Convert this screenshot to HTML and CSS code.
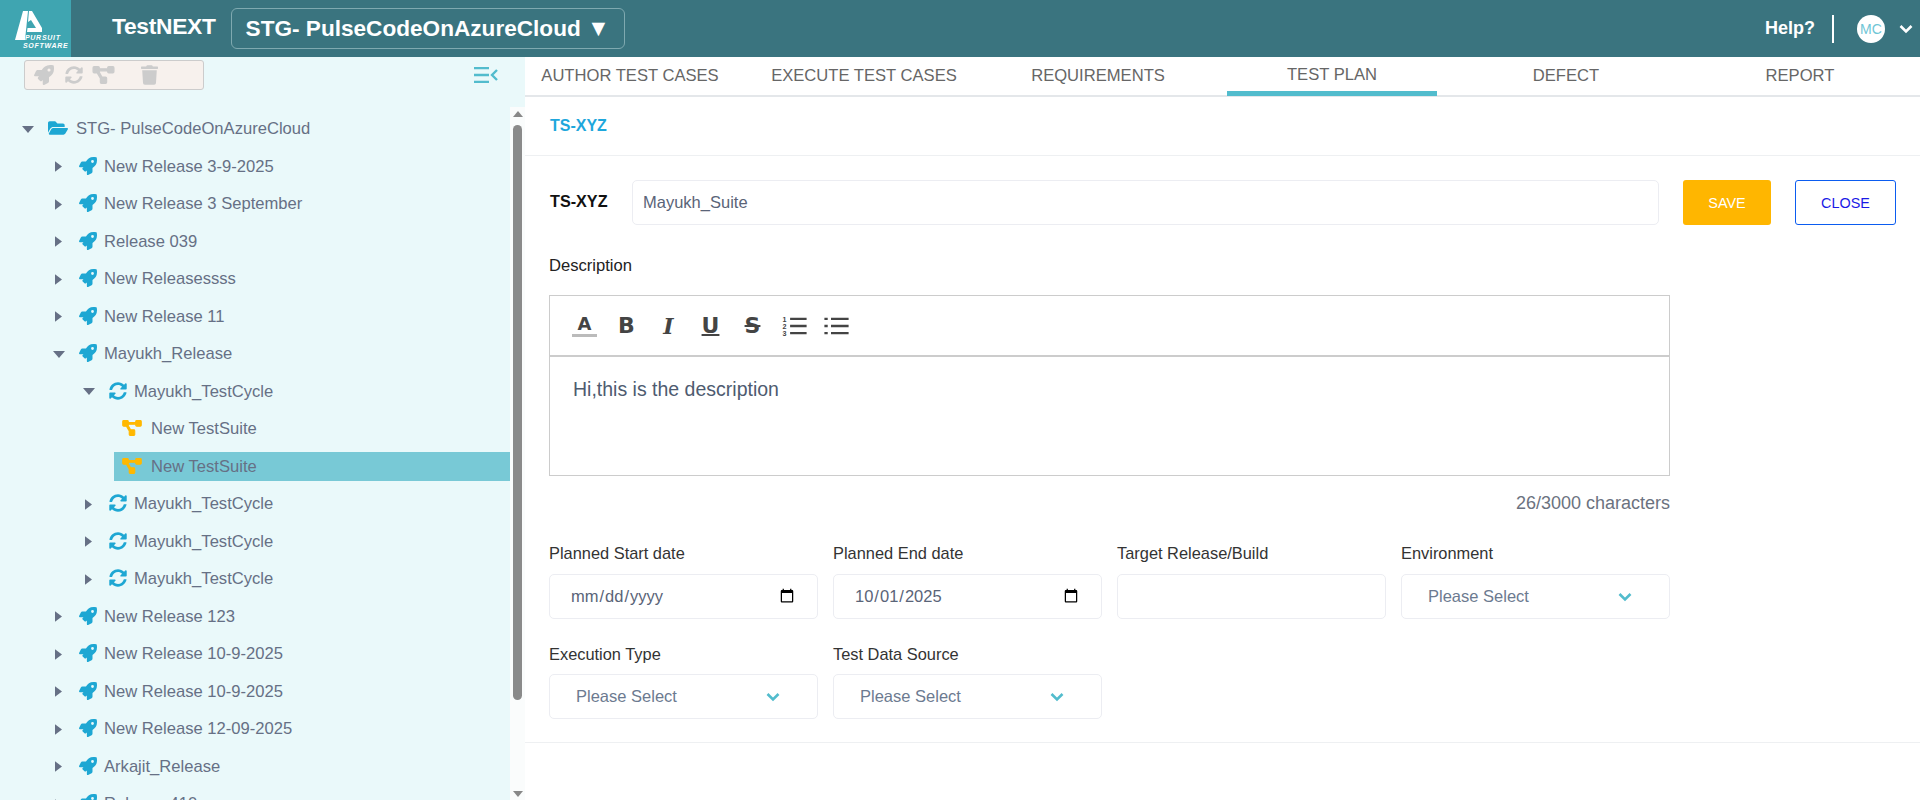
FILE: index.html
```html
<!DOCTYPE html>
<html lang="en">
<head>
<meta charset="utf-8">
<title>TestNEXT</title>
<link rel="stylesheet" href="styles.css">
</head>
<body>
<svg class="defs" aria-hidden="true">
  <symbol id="rocket" viewBox="0 0 512 512"><path d="M505.12 19.09c-1.19-5.53-6.66-11-12.21-12.19C460.72 0 435.51 0 410.41 0 307.18 0 245.27 55.2 199.05 128H94.84c-16.35.02-35.56 11.88-42.89 26.48L2.52 253.3A28.4 28.4 0 0 0 0 264a24 24 0 0 0 24 24h103.81l-22.47 22.47c-11.37 11.36-13 32.26 0 45.25l50.9 50.9c11.16 11.19 32.16 13.16 45.28 0L224 384.16V488a24 24 0 0 0 24 24 28.56 28.56 0 0 0 10.71-2.52l98.73-49.39c14.63-7.3 26.51-26.5 26.51-42.86V312.8c72.6-46.31 128.03-108.41 128.03-211.1C512.08 76.5 512.08 51.3 505.12 19.09zM384.04 168a40 40 0 1 1 40.01-40 40.02 40.02 0 0 1-40.01 40z"/></symbol>
  <symbol id="sync" viewBox="0 0 512 512"><path d="M370.72 133.28C339.458 104.008 298.888 87.962 255.848 88c-77.458.068-144.328 53.178-162.791 126.85-1.344 5.363-6.122 9.15-11.651 9.15H24.103c-7.498 0-13.194-6.807-11.807-14.176C33.933 94.924 134.813 8 256 8c66.448 0 126.791 26.136 171.315 68.685L463.03 40.97C478.149 25.851 504 36.559 504 57.941V192c0 13.255-10.745 24-24 24H345.941c-21.382 0-32.09-25.851-16.971-40.971l41.75-41.749zM32 296h134.059c21.382 0 32.09 25.851 16.971 40.971l-41.75 41.75c31.262 29.273 71.835 45.319 114.876 45.28 77.418-.07 144.315-53.144 162.787-126.849 1.344-5.363 6.122-9.15 11.651-9.15h57.304c7.498 0 13.194 6.807 11.807 14.176C478.067 417.076 377.187 504 256 504c-66.448 0-126.791-26.136-171.315-68.685L48.97 471.03C33.851 486.149 8 475.441 8 454.059V320c0-13.255 10.745-24 24-24z"/></symbol>
  <symbol id="diagram" viewBox="-20 -20 680 552"><path stroke-width="36" d="M384 320H256c-17.67 0-32 14.33-32 32v128c0 17.67 14.33 32 32 32h128c17.67 0 32-14.33 32-32V352c0-17.67-14.33-32-32-32zM192 32c0-17.67-14.33-32-32-32H32C14.33 0 0 14.33 0 32v128c0 17.67 14.33 32 32 32h95.72l73.16 128.04C211.98 300.98 232.4 288 256 288h.28L192 175.51V128h224V64H192V32zM608 0H480c-17.67 0-32 14.33-32 32v128c0 17.67 14.33 32 32 32h128c17.67 0 32-14.33 32-32V32c0-17.67-14.33-32-32-32z"/></symbol>
  <symbol id="trash" viewBox="0 0 448 512"><path d="M432 32H312l-9.4-18.7A24 24 0 0 0 281.1 0H166.8a23.72 23.72 0 0 0-21.4 13.3L136 32H16A16 16 0 0 0 0 48v32a16 16 0 0 0 16 16h416a16 16 0 0 0 16-16V48a16 16 0 0 0-16-16zM53.2 467a48 48 0 0 0 47.9 45h245.8a48 48 0 0 0 47.9-45L416 128H32z"/></symbol>
  <symbol id="folder" viewBox="0 0 576 512"><path d="M572.694 292.093L500.27 416.248A63.997 63.997 0 0 1 444.989 448H45.025c-18.523 0-30.064-20.093-20.731-36.093l72.424-124.155A64 64 0 0 1 152 256h399.964c18.523 0 30.064 20.093 20.73 36.093zM152 224h328v-48c0-26.51-21.49-48-48-48H272l-64-64H48C21.49 64 0 85.49 0 112v278.046l69.077-118.418C86.214 242.25 117.989 224 152 224z"/></symbol>
  <symbol id="right" viewBox="0 0 8 12"><path d="M0 0l8 6-8 6z"/></symbol>
  <symbol id="down" viewBox="0 1 12 7"><path d="M0 1h12L6 8z"/></symbol>
  <symbol id="chev" viewBox="0 0 14 10"><path d="M1.5 2 7 7.5 12.5 2" fill="none" stroke="currentColor" stroke-width="2.6"/></symbol>
</svg>

<header class="topbar">
  <div class="logo">
    <svg class="logo-mark" viewBox="0 0 71 57">
      <path fill="#fff" d="M23 11 28 11 25 40 15 40Z"/>
      <path fill="#fff" d="M29 11 32 11 42 28 42 32 27 32 27.5 28 36 28 31 20 28 22Z"/>
    </svg>
    <div class="logo-text">PURSUIT<br>SOFTWARE</div>
  </div>
  <div class="brand">TestNEXT</div>
  <div class="project">STG- PulseCodeOnAzureCloud <span class="project-caret">▼</span></div>
  <div class="top-right">
    <span class="help">Help?</span>
    <span class="sep"></span>
    <span class="avatar">MC</span>
    <svg class="top-chev"><use href="#chev"/></svg>
  </div>
</header>

<div class="layout">
  <aside class="sidebar">
    <div class="side-tools">
      <div class="toolbox">
        <svg class="ti ti-rocket"><use href="#rocket"/></svg>
        <svg class="ti ti-sync"><use href="#sync"/></svg>
        <svg class="ti ti-diagram"><use href="#diagram"/></svg>
        <svg class="ti ti-trash"><use href="#trash"/></svg>
      </div>
      <svg class="collapse" viewBox="0 0 24 16"><path d="M0 1h15M0 8h15M0 15h15" stroke="#52bccd" stroke-width="2.4" fill="none"/><path d="M23 3 18 8l5 5" stroke="#52bccd" stroke-width="2.4" fill="none"/></svg>
    </div>
    <ul class="tree">
      <li class="node l0"><svg class="caret cd"><use href="#down"/></svg><svg class="ic ic-folder"><use href="#folder"/></svg><span>STG- PulseCodeOnAzureCloud</span></li>
      <li class="node l1"><svg class="caret cr"><use href="#right"/></svg><svg class="ic"><use href="#rocket"/></svg><span>New Release 3-9-2025</span></li>
      <li class="node l1"><svg class="caret cr"><use href="#right"/></svg><svg class="ic"><use href="#rocket"/></svg><span>New Release 3 September</span></li>
      <li class="node l1"><svg class="caret cr"><use href="#right"/></svg><svg class="ic"><use href="#rocket"/></svg><span>Release 039</span></li>
      <li class="node l1"><svg class="caret cr"><use href="#right"/></svg><svg class="ic"><use href="#rocket"/></svg><span>New Releasessss</span></li>
      <li class="node l1"><svg class="caret cr"><use href="#right"/></svg><svg class="ic"><use href="#rocket"/></svg><span>New Release 11</span></li>
      <li class="node l1"><svg class="caret cd"><use href="#down"/></svg><svg class="ic"><use href="#rocket"/></svg><span>Mayukh_Release</span></li>
      <li class="node l2"><svg class="caret cd"><use href="#down"/></svg><svg class="ic"><use href="#sync"/></svg><span>Mayukh_TestCycle</span></li>
      <li class="node l3"><svg class="ic ic-suite"><use href="#diagram"/></svg><span>New TestSuite</span></li>
      <li class="node l3 selected"><svg class="ic ic-suite"><use href="#diagram"/></svg><span>New TestSuite</span></li>
      <li class="node l2"><svg class="caret cr"><use href="#right"/></svg><svg class="ic"><use href="#sync"/></svg><span>Mayukh_TestCycle</span></li>
      <li class="node l2"><svg class="caret cr"><use href="#right"/></svg><svg class="ic"><use href="#sync"/></svg><span>Mayukh_TestCycle</span></li>
      <li class="node l2"><svg class="caret cr"><use href="#right"/></svg><svg class="ic"><use href="#sync"/></svg><span>Mayukh_TestCycle</span></li>
      <li class="node l1"><svg class="caret cr"><use href="#right"/></svg><svg class="ic"><use href="#rocket"/></svg><span>New Release 123</span></li>
      <li class="node l1"><svg class="caret cr"><use href="#right"/></svg><svg class="ic"><use href="#rocket"/></svg><span>New Release 10-9-2025</span></li>
      <li class="node l1"><svg class="caret cr"><use href="#right"/></svg><svg class="ic"><use href="#rocket"/></svg><span>New Release 10-9-2025</span></li>
      <li class="node l1"><svg class="caret cr"><use href="#right"/></svg><svg class="ic"><use href="#rocket"/></svg><span>New Release 12-09-2025</span></li>
      <li class="node l1"><svg class="caret cr"><use href="#right"/></svg><svg class="ic"><use href="#rocket"/></svg><span>Arkajit_Release</span></li>
      <li class="node l1"><svg class="caret cr"><use href="#right"/></svg><svg class="ic"><use href="#rocket"/></svg><span>Release 410</span></li>
    </ul>
    <div class="scrollbar">
      <svg class="sb-arrow"><use href="#down"/></svg>
      <div class="sb-thumb"></div>
      <svg class="sb-arrow sb-end"><use href="#down"/></svg>
    </div>
  </aside>

  <main class="main">
    <nav class="tabs">
      <div class="tab">AUTHOR TEST CASES</div>
      <div class="tab">EXECUTE TEST CASES</div>
      <div class="tab">REQUIREMENTS</div>
      <div class="tab active">TEST PLAN</div>
      <div class="tab">DEFECT</div>
      <div class="tab">REPORT</div>
    </nav>
    <div class="crumb"><a class="crumb-link">TS-XYZ</a></div>
    <section class="form">
      <div class="title-row">
        <label class="id-label">TS-XYZ</label>
        <input class="box name-input" type="text" value="Mayukh_Suite">
        <button class="btn save">SAVE</button>
        <button class="btn close">CLOSE</button>
      </div>
      <div class="desc-label">Description</div>
      <div class="editor">
        <div class="ed-tools">
          <span class="et et-a">A</span>
          <span class="et et-b">B</span>
          <span class="et et-i">I</span>
          <span class="et et-u">U</span>
          <span class="et et-s">S</span>
          <svg class="et-list" viewBox="0 0 22 20">
            <text x="0" y="6" class="num">1</text><text x="0" y="12.5" class="num">2</text><text x="0" y="19" class="num">3</text>
            <path d="M7 3.5h15M7 10h15M7 16.5h15" stroke="#444" stroke-width="2.2"/>
          </svg>
          <svg class="et-list" viewBox="0 0 22 20">
            <path d="M0 3.5h3M0 10h3M0 16.5h3M6 3.5h16M6 10h16M6 16.5h16" stroke="#444" stroke-width="2.2"/>
          </svg>
        </div>
        <div class="ed-body">Hi,this is the description</div>
      </div>
      <div class="counter">26/3000 characters</div>
      <div class="fields">
        <div class="field"><label>Planned Start date</label><input class="box date" type="date"></div>
        <div class="field"><label>Planned End date</label><input class="box date" type="date" value="2025-10-01"></div>
        <div class="field"><label>Target Release/Build</label><input class="box" type="text"></div>
        <div class="field"><label>Environment</label><div class="box select"><span>Please Select</span><svg class="sel-chev"><use href="#chev"/></svg></div></div>
        <div class="field tight"><label>Execution Type</label><div class="box select"><span>Please Select</span><svg class="sel-chev"><use href="#chev"/></svg></div></div>
        <div class="field tight"><label>Test Data Source</label><div class="box select"><span>Please Select</span><svg class="sel-chev"><use href="#chev"/></svg></div></div>
      </div>
    </section>
  </main>
</div>
</body>
</html>
```
FILE: styles.css
```css
* { box-sizing: border-box; }
html, body { margin: 0; height: 100%; overflow: hidden; }
body { font-family: "Liberation Sans", Arial, sans-serif; color: #212529; background: #fff; display: flex; flex-direction: column; }
.defs { display: none; }

.topbar { height: 57px; flex: none; background: #3a747f; display: flex; align-items: center; color: #fff; }
.logo { width: 71px; height: 57px; background: #3fa5b1; position: relative; flex: none; }
.logo-mark { position: absolute; left: 0; top: 0; width: 71px; height: 57px; }
.logo-text { position: absolute; left: 23px; top: 34px; font: italic bold 7px/8px "Liberation Sans", sans-serif; letter-spacing: .7px; white-space: nowrap; text-indent: 2px; }
.brand { margin-left: 41px; font-size: 22.8px; font-weight: 700; letter-spacing: -.3px; transform: translateY(-2px); }
.project { margin-left: 15px; height: 41px; padding: 0 14px; border: 1px solid #7fa9b0; border-radius: 6px; font-size: 22.6px; font-weight: 700; line-height: 39px; white-space: nowrap; }
.project-caret { font-size: 23px; line-height: 20px; }
.top-right { margin-left: auto; display: flex; align-items: center; }
.help { font-size: 18px; font-weight: 700; }
.sep { width: 2px; height: 28px; background: #fff; margin: 0 23px 0 17px; }
.avatar { width: 28px; height: 28px; border-radius: 50%; background: #fff; color: #6fc6d6; font-size: 14px; text-align: center; line-height: 28px; }
.top-chev { width: 14px; height: 10px; margin: 0 7px 0 14px; color: #fff; }

.layout { flex: 1; display: flex; min-height: 0; }
.sidebar { width: 525px; flex: none; background: #eaf9fa; position: relative; overflow: hidden; z-index: 1; }
.side-tools { display: flex; align-items: center; justify-content: space-between; padding: 3px 27px 0 24px; height: 33px; }
.toolbox { width: 180px; height: 30px; background: #f7f1ed; border: 1px solid #ccc; border-radius: 3px; display: flex; align-items: center; }
.toolbox svg { fill: #ccc; stroke: #ccc; }
.ti-rocket { width: 20px; height: 20px; margin-left: 9px; stroke: none !important; }
.ti-sync { width: 18px; height: 18px; margin-left: 11px; stroke: none !important; }
.ti-diagram { width: 23px; height: 18px; margin-left: 9px; }
.ti-trash { width: 17px; height: 20px; margin-left: 26px; stroke: none !important; }
.collapse { width: 24px; height: 16px; }

.tree { list-style: none; margin: 20.5px 0 0; padding: 0; width: 510px; }
.node { height: 37.5px; display: flex; align-items: center; font-size: 16.6px; color: #667085; white-space: nowrap; }
.caret { fill: #667085; flex: none; }
.cd { width: 12px; height: 7px; }
.cr { width: 7px; height: 11px; margin: 0 3px 0 2px; }
.ic { width: 18px; height: 18px; fill: #1ea7d3; margin: 0 7px 0 8px; flex: none; transform: translateY(-1px); }
.l0 { padding-left: 22px; }
.l0 .ic-folder { width: 20px; height: 18px; margin: 0 8px 0 14px; }
.l1 { padding-left: 53px; }
.l1 .ic { margin-left: 14px; }
.l2 { padding-left: 83px; }
.l2 .ic { margin-left: 14px; }
.l3 { padding-left: 122px; }
.l3 .ic { margin-left: 0; }
.ic-suite { width: 20px; height: 16px; fill: #ffb800; stroke: #ffb800; margin-right: 9px; }
.selected { background: #78c9d6; height: 29px; margin: 4.25px 0; margin-left: 114px; padding-left: 8px; }

.scrollbar { position: absolute; top: 50px; right: 0; bottom: 0; width: 15px; background: #fafcfc; display: flex; flex-direction: column; align-items: center; }
.sb-arrow { width: 10px; height: 6px; fill: #888; margin-top: 4px; transform: scaleY(-1); }
.sb-thumb { width: 9px; height: 575px; background: #8a8a8a; border-radius: 5px; margin-top: 8px; }
.sb-end { margin-top: auto; margin-bottom: 3px; transform: none; }

.main { flex: 1; min-width: 0; position: relative; }
.tabs { display: flex; height: 40px; margin-left: -12px; border-bottom: 2px solid #e4e7ea; }
.tab { width: 234px; position: relative; text-align: center; font-size: 16.6px; line-height: 38px; color: #666; }
.tab.active { line-height: 35px; }
.tab.active::after { content: ""; position: absolute; left: 12px; right: 12px; bottom: -1px; height: 5px; background: #52bccd; }
.crumb { height: 59px; padding: 0 25px; border-bottom: 1px solid #eef0f2; display: flex; align-items: center; }
.crumb-link { color: #1ea7dc; font-size: 16px; font-weight: 700; }
.form { width: 1395px; padding: 24px 24px 0 24px; height: 587px; border-bottom: 1px solid #eef0f2; }
.title-row { display: flex; align-items: center; height: 45px; }
.id-label { font-size: 16.2px; font-weight: 700; color: #111; width: 83px; flex: none; padding-left: 1px; transform: translateY(-1px); }
.box { border: 1px solid #ecedf2; border-radius: 5px; background: #fff; height: 45px; font: 16.5px "Liberation Sans", sans-serif; color: #5a6478; outline: none; }
.name-input { width: 1027px; padding: 0 10px; flex: none; }
.btn { height: 45px; border-radius: 3px; font: 14.4px "Liberation Sans", sans-serif; flex: none; }
.save { width: 88px; background: #ffb600; color: #fff; border: 0; margin-left: 24px; }
.close { width: 101px; background: #fff; color: #1a1ae6; border: 1px solid #0b5cf0; margin-left: 24px; }
.desc-label { font-size: 16.6px; margin-top: 31px; line-height: 20px; color: #222; }
.editor { width: 1121px; height: 181px; margin-top: 19px; border: 1px solid #ccc; display: flex; flex-direction: column; }
.ed-tools { height: 61px; border-bottom: 2px solid #ccc; display: flex; align-items: center; padding-left: 22px; gap: 17px; flex: none; }
.et { width: 25px; text-align: center; font: 700 22px "DejaVu Sans", sans-serif; color: #444; line-height: 24px; }
.et-a { border-bottom: 3px solid #bbb; line-height: 20px; font-size: 18px; }
.et-i { font-family: "DejaVu Serif", serif; font-style: italic; }
.et-u { text-decoration: underline; text-decoration-thickness: 2px; }
.et-s { text-decoration: line-through; text-decoration-thickness: 2px; }
.et-list { width: 25px; height: 22px; }
.num { font: 700 6.5px "Liberation Sans", sans-serif; fill: #444; }
.ed-body { padding: 20px 22px 18px 23px; font-size: 19.5px; line-height: 24px; color: #4e5b70; }
.counter { width: 1121px; text-align: right; font-size: 18px; color: #6b7280; margin-top: 17px; line-height: 20px; }
.fields { width: 1121px; display: grid; grid-template-columns: repeat(4, 1fr); column-gap: 15px; row-gap: 25px; margin-top: 30px; }
.field label { display: block; font-size: 16.4px; line-height: 20px; color: #333; margin-bottom: 11px; }
.field.tight label { margin-bottom: 10px; }
.field .box { width: 100%; display: block; }
.date { padding: 0 20px; }
.select { display: flex !important; align-items: center; justify-content: space-between; padding: 0 37px 0 26px; color: #6c7a90; }
.sel-chev { width: 14px; height: 10px; color: #52bccd; }
```
